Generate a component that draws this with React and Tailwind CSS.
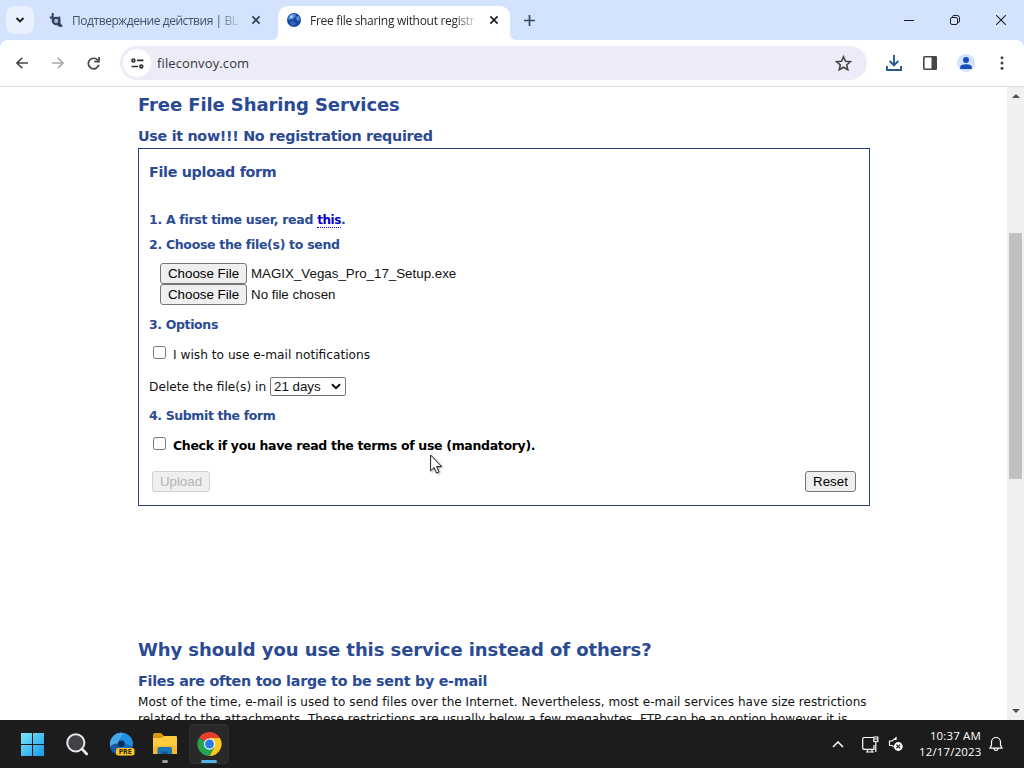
import { useState } from 'react';

const icon = { fill: 'none', stroke: 'currentColor' };

function CloseIcon({ className }) {
  return (
    <svg className={className} width="10" height="10" viewBox="0 0 10 10" {...icon} strokeWidth="1.7">
      <path d="M1.4 1.4l7.2 7.2M8.6 1.4L1.4 8.6" />
    </svg>
  );
}

function TabStrip() {
  return (
    <div className="flex h-10 bg-[#d3e3fd] text-[#1f1f1f]">
      <div className="w-[272px] flex items-center pl-1.5">
        <button className="w-7 h-7 rounded-[9px] bg-[#e9f1fe] flex items-center justify-center">
          <svg width="10" height="8" viewBox="0 0 10 8" {...icon} strokeWidth="1.9"><path d="M1.5 2L5 5.5 8.5 2" /></svg>
        </button>
        <svg className="ml-[15px]" width="15" height="17" viewBox="0 0 15 17" {...icon} stroke="#32425c">
          <path d="M3.7 1v9.5M.8 5.5h4" strokeWidth="1.9" />
          <circle cx="7.2" cy="9" r="3.2" fill="#a9bbda" strokeWidth="2.1" />
          <path d="M10.3 4.5V11l2.7 3.8M8.5 12.5l3 2" strokeWidth="1.9" />
        </svg>
        <div className="ml-2 pt-0.5 w-[167px] whitespace-nowrap font-['Open_Sans',sans-serif] text-[12px] leading-5 tracking-[-0.45px] text-[#43506a] [mask-image:linear-gradient(to_right,black_146px,transparent_169px)]">
          Подтверждение действия | BL
        </div>
        <CloseIcon className="ml-[12px] text-[#333f55]" />
      </div>

      <div className="w-[244px] flex items-end">
        <div className="w-1.5 h-2.5 bg-white">
          <div className="size-full bg-[#d3e3fd] rounded-br-[6px]" />
        </div>
        <div className="w-[232px] h-[34px] rounded-t-[10px] bg-white flex items-center pl-[9px] pb-1.5">
          <svg width="14" height="14" viewBox="0 0 14 14">
            <circle cx="7" cy="7" r="7" fill="#1b469c" />
            <path d="M1 5Q4 0 8 1L9 3 6 6 2 7zM9 4l3-1 1 4-3 1z" fill="#4f93dd" />
            <path d="M3 9l3-1 3 2-2 3-3-1z" fill="#2c67c9" />
            <circle cx="4.3" cy="3.8" r="1.3" fill="#c2e1fb" />
          </svg>
          <div className="ml-[9px] pt-0.5 w-[169px] whitespace-nowrap font-['Open_Sans',sans-serif] text-[12px] leading-5 tracking-[-0.3px] text-[#2b2b2b] [mask-image:linear-gradient(to_right,black_145px,transparent_169px)]">
            Free file sharing without registr
          </div>
          <CloseIcon className="ml-[10px] text-[#1f1f1f]" />
        </div>
        <div className="w-1.5 h-2.5 bg-white">
          <div className="size-full bg-[#d3e3fd] rounded-bl-[6px]" />
        </div>
      </div>

      <div className="flex-1 flex items-center pl-2">
        <svg width="11" height="11" viewBox="0 0 11 11" {...icon} stroke="#3b475c" strokeWidth="1.7"><path d="M5.5 0v11M0 5.5h11" /></svg>
        <div className="ml-auto mr-[18px] flex items-center">
          <svg width="10" height="10" viewBox="0 0 10 10" {...icon}><path d="M0 5.5h10" /></svg>
          <svg className="ml-9" width="10" height="10" viewBox="0 0 10 10" {...icon}>
            <rect x=".5" y="2.5" width="7" height="7" rx="1.5" />
            <path d="M2.5 2V1.7Q2.7.5 4 .5h3.2Q9.5.5 9.5 2.8V6Q9.5 7.4 8 7.5" />
          </svg>
          <svg className="ml-9" width="10" height="10" viewBox="0 0 10 10" {...icon} strokeWidth="1.1"><path d="M0 0l10 10M10 0L0 10" /></svg>
        </div>
      </div>
    </div>
  );
}

function Toolbar() {
  return (
    <div className="bg-[#d3e3fd]">
      <div className="h-[47px] rounded-t-[8px] bg-white border-b border-[#dcdde2] flex items-center text-[#454746]">
        <svg className="ml-4" width="12" height="12" viewBox="0 0 12 12" {...icon} strokeWidth="1.6"><path d="M12 6H1M6.3.7L1 6l5.3 5.3" /></svg>
        <svg className="ml-6 text-[#aaa9ab]" width="12" height="12" viewBox="0 0 12 12" {...icon} strokeWidth="1.6"><path d="M0 6h11M5.7.7L11 6l-5.3 5.3" /></svg>
        <svg className="ml-[23px]" width="13" height="13" viewBox="0 0 13 13" {...icon} strokeWidth="1.7">
          <path d="M11 3.5A5.3 5.3 0 1 0 11.8 7.8" />
          <path d="M12 0v4.6H7.3" />
        </svg>

        <div className="ml-5 w-[747px] h-[34px] rounded-full bg-[#ebecf7] flex items-center">
          <div className="ml-[3px] size-7 rounded-full bg-white flex items-center justify-center">
            <svg width="13" height="11" viewBox="0 0 13 11" {...icon} stroke="#303134" strokeWidth="1.7">
              <circle cx="2.4" cy="2.4" r="1.4" /><path d="M6 2.4h6.5M.5 8.5H7" /><circle cx="10.3" cy="8.5" r="1.4" />
            </svg>
          </div>
          <div className="ml-1.5 font-['Open_Sans',sans-serif] text-[13px] leading-5 tracking-[0.12px] text-[#34353a]">fileconvoy.com</div>
          <svg className="ml-auto mr-[15px]" width="17" height="16" viewBox="0 0 17 16" {...icon} strokeWidth="1.6">
            <path d="M8.5 1.7l2 4.5 4.9.5-3.7 3.3 1.1 4.8-4.3-2.5-4.3 2.5 1.1-4.8L1.6 6.7l4.9-.5z" />
          </svg>
        </div>

        <svg className="ml-[19px] text-[#265a92]" width="16" height="16" viewBox="0 0 16 16" {...icon} strokeWidth="1.9">
          <path d="M8 0v10.2M3.7 6L8 10.3 12.3 6M1 11v4h14v-4" />
        </svg>
        <svg className="ml-[21px]" width="14" height="14" viewBox="0 0 14 14">
          <rect x=".8" y=".8" width="12.4" height="12.4" rx="1" {...icon} strokeWidth="1.6" />
          <path d="M8.5 0H13l1 1v12l-1 1H8.5z" fill="currentColor" />
        </svg>
        <svg className="ml-5" width="18" height="18" viewBox="0 0 18 18">
          <circle cx="9" cy="9" r="9" fill="#d0e2fc" />
          <circle cx="9" cy="6.1" r="3" fill="#174ebd" />
          <path d="M3.2 15v-1.8Q3.2 10.2 9 10.2t5.8 3V15z" fill="#174ebd" />
        </svg>
        <svg className="ml-[25px]" width="4" height="14" viewBox="0 0 4 14" fill="currentColor">
          <circle cx="2" cy="1.8" r="1.5" /><circle cx="2" cy="7" r="1.5" /><circle cx="2" cy="12.2" r="1.5" />
        </svg>
      </div>
    </div>
  );
}

function Button({ className, ...props }) {
  return (
    <button
      className={`h-[21px] rounded-[3px] border border-[#767676] bg-[#efefef] font-['Liberation_Sans',sans-serif] text-[13.33px] leading-[19px] text-black disabled:border-[#d0d0d0] disabled:text-[#b4b4b4] ${className}`}
      {...props}
    />
  );
}

function UploadForm() {
  const [notify, setNotify] = useState(false);
  const [terms, setTerms] = useState(false);

  return (
    <form className="h-[358px] border border-[#2b4478] pl-2.5 pr-[13px]" onSubmit={(e) => e.preventDefault()}>
      <h3 className="h-[46px] leading-[46px] text-[14.3px] tracking-[-0.3px] font-bold text-[#2a4a94]">File upload form</h3>
      <div className="pt-3 text-[12.5px] font-bold leading-[25px] tracking-[-0.3px] text-[#2a4a94]">
        <p className="h-[25px]">
          1. A first time user, read <a className="text-[12px] leading-3 tracking-[-0.42px] text-[#0000c8] border-b border-dotted border-[#0000c8]">this</a>.
        </p>
        <p className="h-[25px]">2. Choose the file(s) to send</p>
      </div>

      <div className="mt-1.5 ml-[11px] font-['Liberation_Sans',sans-serif] text-[13.33px] leading-[21px]">
        <div className="flex h-[21px]">
          <Button type="button" className="w-[87px]">Choose File</Button>
          <span className="ml-1">MAGIX_Vegas_Pro_17_Setup.exe</span>
        </div>
        <div className="flex h-[21px]">
          <Button type="button" className="w-[87px]">Choose File</Button>
          <span className="ml-1">No file chosen</span>
        </div>
      </div>

      <h4 className="mt-2 text-[12.5px] leading-6 font-bold tracking-[-0.36px] text-[#2a4a94]">3. Options</h4>
      <label className="mt-[7px] flex h-[22px] text-[12.2px] leading-[22px]">
        <input type="checkbox" className="ml-1 mt-[2px] size-[13px]" checked={notify} onChange={(e) => setNotify(e.target.checked)} />
        <span className="ml-[7px]">I wish to use e-mail notifications</span>
      </label>
      <div className="mt-[11px] flex h-[19px] text-[12.2px] leading-[21px]">
        <span className="w-[121px] whitespace-nowrap">Delete the file(s) in</span>
        <button type="button" className="w-[76px] rounded-[2px] border border-[#767676] bg-white flex items-center justify-between pl-[3px] pr-1 font-['Liberation_Sans',sans-serif] text-[13.33px] leading-[17px]">
          21 days
          <svg width="10" height="7" viewBox="0 0 10 7" {...icon} strokeWidth="2"><path d="M1 1.2l4 4 4-4" /></svg>
        </button>
      </div>

      <h4 className="mt-2 text-[12.5px] leading-6 font-bold tracking-[-0.38px] text-[#2a4a94]">4. Submit the form</h4>
      <label className="mt-[7px] flex h-[22px] text-[12.5px] leading-[22px] font-bold text-black">
        <input type="checkbox" className="ml-1 mt-[2px] size-[13px]" checked={terms} onChange={(e) => setTerms(e.target.checked)} />
        <span className="ml-[7px] tracking-[-0.32px]">Check if you have read the terms of use (mandatory).</span>
      </label>
      <div className="mt-[14px] pl-[3px] flex justify-between">
        <Button disabled className="w-[58px]">Upload</Button>
        <Button type="reset" className="w-[51px]">Reset</Button>
      </div>
    </form>
  );
}

function Page() {
  return (
    <div className="flex-1 min-h-0 flex bg-white">
      <main className="flex-1 overflow-hidden pl-[138px] font-['DejaVu_Sans',Verdana,sans-serif] text-[#111]">
        <div className="w-[732px]">
          <h1 className="h-[35px] leading-[35px] text-[18px] tracking-[-0.1px] font-bold text-[#2a4a94] whitespace-nowrap">Free File Sharing Services</h1>
          <h2 className="h-[26px] leading-[29px] text-[14.3px] tracking-[-0.29px] font-bold text-[#2a4a94] whitespace-nowrap">Use it now!!! No registration required</h2>
          <UploadForm />
          <h1 className="mt-[126px] h-[35px] leading-[35px] text-[18px] tracking-[-0.08px] font-bold text-[#2a4a94] whitespace-nowrap">Why should you use this service instead of others?</h1>
          <h2 className="h-[26px] leading-[29px] text-[14.3px] tracking-[-0.26px] font-bold text-[#2a4a94] whitespace-nowrap">Files are often too large to be sent by e-mail</h2>
          <p className="pt-px text-[12px] leading-[17px] tracking-[0.058px] whitespace-nowrap">
            Most of the time, e-mail is used to send files over the Internet. Nevertheless, most e-mail services have size restrictions
            <br />
            <span className="tracking-[0.025px]">
              related to the attachments. These restrictions are usually below a few megabytes. FTP can be an option however it is
            </span>
          </p>
        </div>
      </main>
      <div className="w-[17px] bg-[#f0f0f0] flex flex-col items-center justify-between py-[7px]">
        <svg width="8" height="4" viewBox="0 0 8 4" fill="#505050"><path d="M0 4l4-4 4 4z" /></svg>
        <div className="w-[13px] h-[246px] -mt-[96px] bg-[#c1c1c1]" />
        <svg width="8" height="4" viewBox="0 0 8 4" fill="#505050"><path d="M0 0l4 4 4-4z" /></svg>
      </div>
    </div>
  );
}

function Taskbar() {
  return (
    <div className="h-12 bg-[#1c1c1c] flex items-center text-white">
      <svg className="ml-[21px]" width="23" height="23" viewBox="0 0 23 23">
        <defs>
          <linearGradient id="win" x2="1" y2="1"><stop stopColor="#7fe3fb" /><stop offset="1" stopColor="#159be9" /></linearGradient>
        </defs>
        <path fill="url(#win)" d="M0 0h11v11H0zM12 0h11v11H12zM0 12h11v11H0zM12 12h11v11H12z" />
      </svg>
      <svg className="ml-[22px]" width="23" height="23" viewBox="0 0 23 23">
        <circle cx="9.8" cy="9.8" r="8.6" fill="#424348" stroke="#e7e7ea" strokeWidth="2" />
        <path d="M16 16l4.7 5" stroke="#e7e7ea" strokeWidth="2.7" strokeLinecap="round" />
      </svg>
      <svg className="ml-5" width="26" height="25" viewBox="0 0 26 25">
        <circle cx="12.4" cy="12" r="11.4" fill="#176bbf" />
        <path d="M2 7Q7-1 15 1.2L10 9Q7 13 10 18L4 20Q-1 13 2 7z" fill="#4ba8e8" />
        <path d="M15 1.2Q25 4 23.5 14L17 12 10 8z" fill="#1e91e4" />
        <path d="M1 15q4-5 8-3l2 6-2 5Q2 21 1 15z" fill="#1257a5" />
        <circle cx="12.4" cy="11.7" r="3.3" fill="#0c2c55" />
        <rect x="7" y="16" width="18.5" height="7.5" rx="2.2" fill="#fcc624" />
        <text x="16.2" y="22.3" textAnchor="middle" fontFamily="Open Sans, sans-serif" fontWeight="700" fontSize="7" fill="#241c00">PRE</text>
      </svg>
      <div className="ml-[17px] w-[26px] h-12 flex flex-col items-center pt-3">
        <svg width="26" height="24" viewBox="0 0 26 24">
          <path d="M1 3q0-2 2-2h6l3 3-2 3H1z" fill="#d7960e" />
          <path d="M1 6h8l3-2h12q1 0 1 1v17H1z" fill="#fccb3f" />
          <path d="M1 14h24v7q0 1-1 1H2q-1 0-1-1z" fill="#f8bb26" />
          <path d="M5.5 22v-5q0-2 2-2H18q2 0 2 2v5z" fill="#1777b8" />
          <path d="M9.5 22v-2.5h6.5V22z" fill="#12588f" />
        </svg>
        <div className="mt-1 w-1.5 h-[3px] rounded-full bg-[#a0a0a0]" />
      </div>
      <div className="ml-[11px] w-10 h-10 rounded-[4px] border border-[#303030] bg-[#292929] flex flex-col items-center">
        <svg className="mt-[7px]" width="25" height="25" viewBox="0 0 24 24">
          <path d="M12 12L1.6 6A12 12 0 0 1 22.4 6z" fill="#e43e2f" />
          <path d="M12 12L1.6 6A12 12 0 0 0 12 24l5-9z" fill="#24a452" />
          <path d="M12 12l5 3-5 9A12 12 0 0 0 22.4 6H12z" fill="#fcca21" />
          <circle cx="12" cy="12" r="5.6" fill="#fff" />
          <circle cx="12" cy="12" r="4.5" fill="#287be8" />
        </svg>
        <div className="mt-1 w-4 h-[3px] rounded-full bg-[#55b2e7]" />
      </div>

      <div className="ml-auto mr-[21px] flex items-center">
        <svg width="12" height="7" viewBox="0 0 12 7" {...icon} strokeWidth="1.5"><path d="M1 6l5-5 5 5" /></svg>
        <svg className="ml-[18px]" width="17" height="17" viewBox="0 0 17 17" {...icon} strokeWidth="1.2">
          <path d="M11 1.5H2Q.7 1.5.7 3v9q0 1.3 1.3 1.3h10V9M4 16h8M5.5 13.5V16M10 13.5V16" />
          <path d="M11.8 1h4v4.5h-4zM13.8 5.5V16M12.5 3h2.5" />
        </svg>
        <svg className="ml-[9px]" width="16" height="16" viewBox="0 0 16 16">
          <path d="M8 4V1.8L4.2 5H1.5v4.5h2.7l1.5 1.4" {...icon} strokeWidth="1.2" />
          <circle cx="10.3" cy="10.5" r="4.4" fill="#fff" />
          <path d="M8.4 8.6l3.8 3.8m0-3.8l-3.8 3.8" stroke="#1c1c1c" strokeWidth="1.2" />
        </svg>
        <div className="ml-[15px] w-[62px] text-right whitespace-nowrap font-['Open_Sans',sans-serif] text-[11.5px] leading-4">
          <div className="tracking-[0.15px]">10:37 AM</div>
          <div className="tracking-[0.15px]">12/17/2023</div>
        </div>
        <svg className="ml-2" width="14" height="16" viewBox="0 0 14 16" {...icon} strokeWidth="1.2">
          <path d="M1 12.2h12L11.5 9V6A4.5 4.5 0 0 0 2.5 6v3zM5 12.5q.2 2 2 2t2-2" />
        </svg>
      </div>
    </div>
  );
}

export default function App() {
  return (
    <div className="relative w-[1024px] h-[768px] overflow-hidden flex flex-col">
      <TabStrip />
      <Toolbar />
      <Page />
      <Taskbar />
      <svg className="absolute left-[430px] top-[454px] drop-shadow-[1px_1px_1px_rgba(0,0,0,0.35)]" width="13" height="20" viewBox="0 0 13 20">
        <path d="M.6 1v15.8l3.5-3.4L6.5 19l2.5-1.1-2.4-5.4h5z" fill="#fff" stroke="#222" strokeWidth="1" />
      </svg>
    </div>
  );
}
